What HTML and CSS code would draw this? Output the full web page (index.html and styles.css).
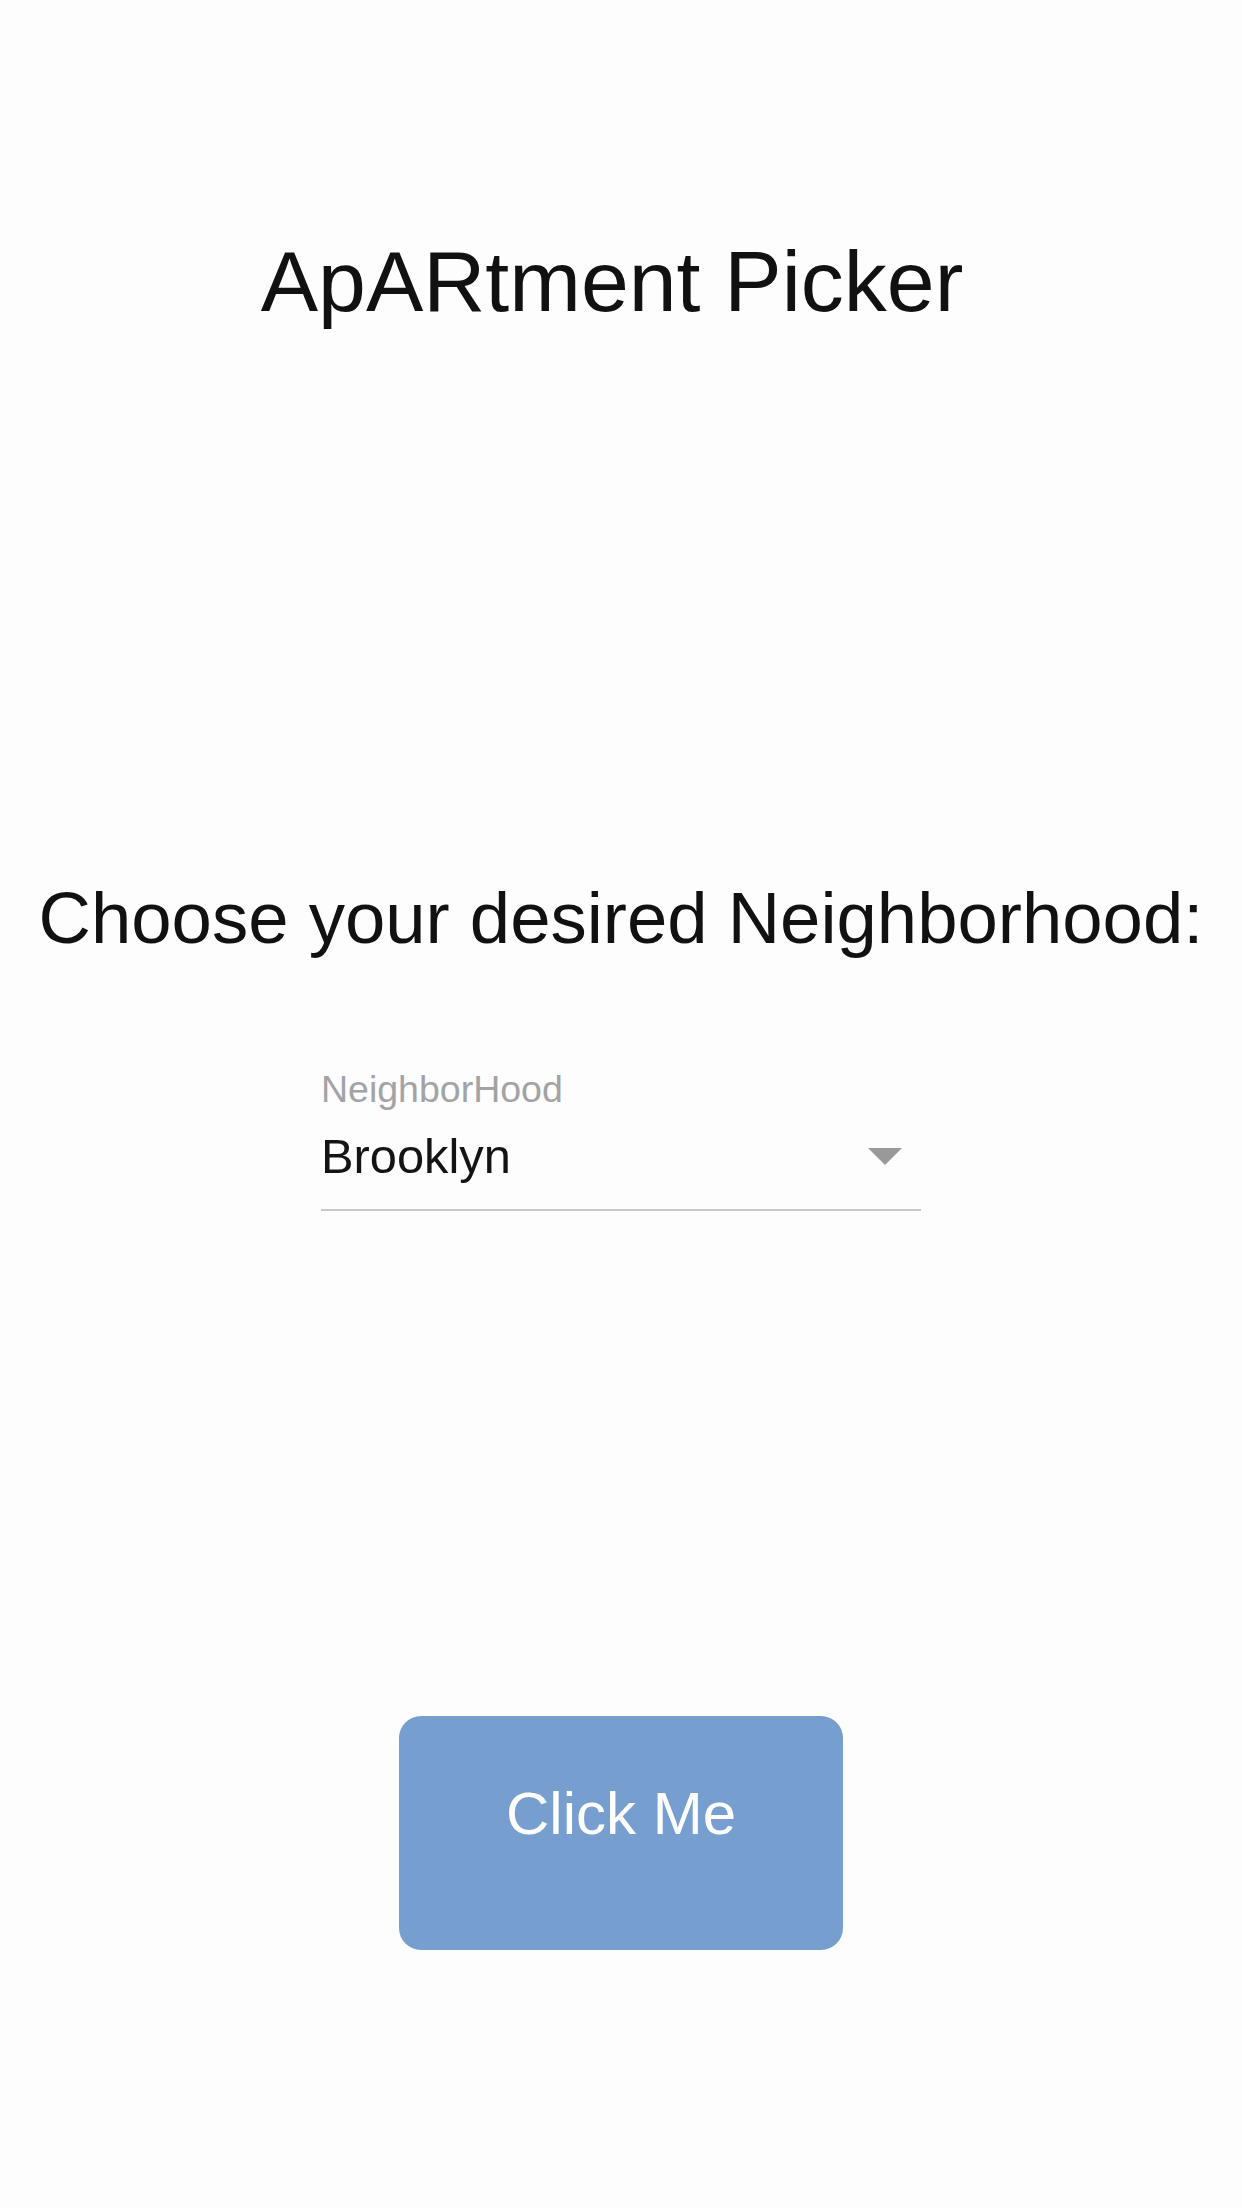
FILE: index.html
```html
<!DOCTYPE html>
<html lang="en">
<head>
<meta charset="utf-8">
<title>ApARtment Picker</title>
<link rel="stylesheet" href="styles.css">
</head>
<body>
<main class="screen">
  <h1 class="title">ApARtment Picker</h1>
  <p class="prompt">Choose your desired Neighborhood:</p>
  <div class="field">
    <div class="field-label">NeighborHood</div>
    <div class="field-row">
      <span class="field-value">Brooklyn</span>
      <svg class="field-arrow" width="34" height="17" viewBox="0 0 34 17" aria-hidden="true"><path d="M0 0 H34 L17 17 Z" fill="#999999"/></svg>
    </div>
  </div>
  <button class="cta" type="button">Click Me</button>
</main>
</body>
</html>
```
FILE: styles.css
```css
html, body {
  margin: 0;
  padding: 0;
  background: #fdfdfd;
}
body {
  font-family: "Liberation Sans", Arial, sans-serif;
  color: #111111;
}
.screen {
  width: 1242px;
  height: 2208px;
  display: flex;
  flex-direction: column;
  align-items: center;
  padding-top: 231px;
  box-sizing: border-box;
}
.title {
  margin: 0;
  padding-right: 18px;
  font-weight: 400;
  font-size: 86px;
  line-height: 100px;
  color: #111111;
}
.prompt {
  margin: 542px 0 0;
  font-size: 72.5px;
  line-height: 90px;
  color: #111111;
}
.field {
  margin-top: 105px;
  width: 600px;
  display: flex;
  flex-direction: column;
}
.field-label {
  font-size: 37.5px;
  line-height: 42px;
  color: #a3a3a6;
}
.field-row {
  margin-top: 18px;
  display: flex;
  align-items: center;
  justify-content: space-between;
  padding-bottom: 25px;
  border-bottom: 2px solid #c8c8ca;
}
.field-value {
  font-size: 48.8px;
  line-height: 56px;
  color: #141414;
}
.field-arrow {
  margin-right: 19px;
  display: block;
}
.cta {
  margin-top: 505px;
  width: 444px;
  height: 234px;
  border: none;
  border-radius: 22px;
  background: #769fcf;
  color: #ffffff;
  font-family: "Liberation Sans", Arial, sans-serif;
  font-size: 60px;
  line-height: 70px;
  padding: 63px 0 0;
  display: flex;
  justify-content: center;
  align-items: flex-start;
  box-sizing: border-box;
}
```
